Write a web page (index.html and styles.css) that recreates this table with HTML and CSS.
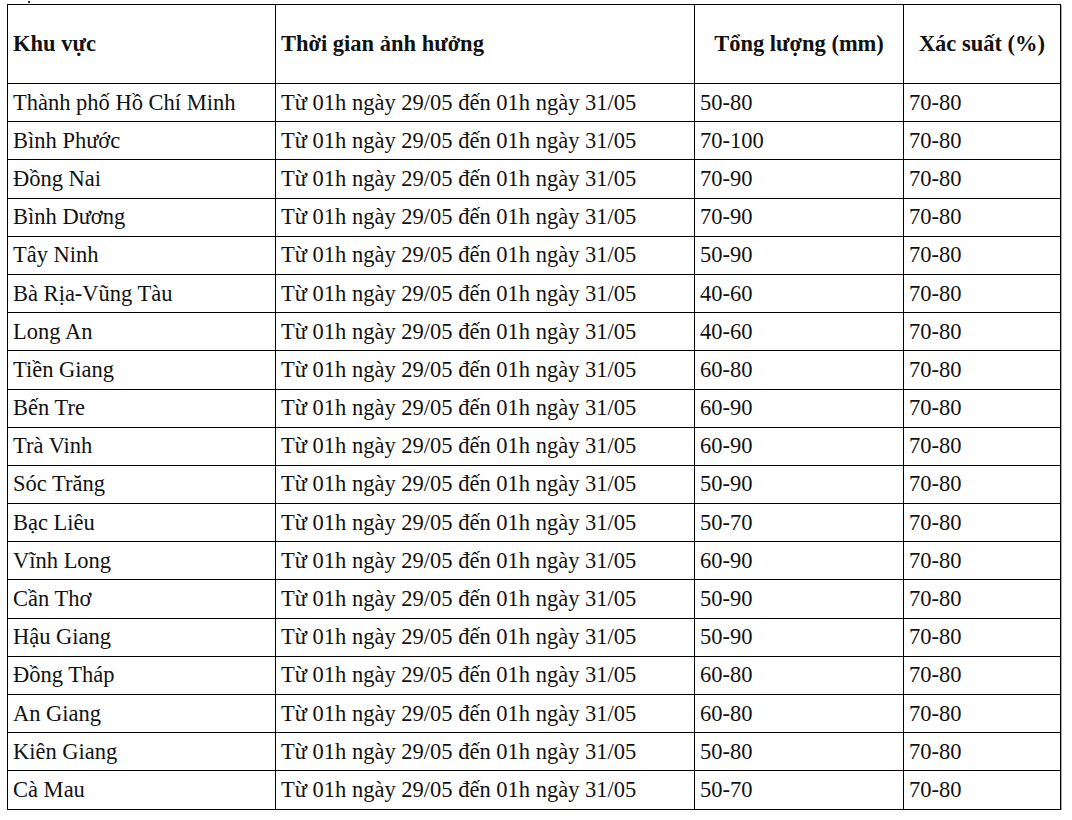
FILE: index.html
```html
<!DOCTYPE html>
<html lang="vi">
<head>
<meta charset="utf-8">
<link rel="stylesheet" href="styles.css">
</head>
<body>
<div class="page">
  <div class="cut"><span class="dot"></span></div>
  <table class="rain">
    <colgroup>
      <col class="c1"><col class="c2"><col class="c3"><col class="c4">
    </colgroup>
    <thead>
      <tr>
        <th class="left">Khu vực</th>
        <th class="left">Thời gian ảnh hưởng</th>
        <th>Tổng lượng (mm)</th>
        <th>Xác suất (%)</th>
      </tr>
    </thead>
    <tbody>
      <tr><td>Thành phố Hồ Chí Minh</td><td>Từ 01h ngày 29/05 đến 01h ngày 31/05</td><td>50-80</td><td>70-80</td></tr>
      <tr><td>Bình Phước</td><td>Từ 01h ngày 29/05 đến 01h ngày 31/05</td><td>70-100</td><td>70-80</td></tr>
      <tr><td>Đồng Nai</td><td>Từ 01h ngày 29/05 đến 01h ngày 31/05</td><td>70-90</td><td>70-80</td></tr>
      <tr><td>Bình Dương</td><td>Từ 01h ngày 29/05 đến 01h ngày 31/05</td><td>70-90</td><td>70-80</td></tr>
      <tr><td>Tây Ninh</td><td>Từ 01h ngày 29/05 đến 01h ngày 31/05</td><td>50-90</td><td>70-80</td></tr>
      <tr><td>Bà Rịa-Vũng Tàu</td><td>Từ 01h ngày 29/05 đến 01h ngày 31/05</td><td>40-60</td><td>70-80</td></tr>
      <tr><td>Long An</td><td>Từ 01h ngày 29/05 đến 01h ngày 31/05</td><td>40-60</td><td>70-80</td></tr>
      <tr><td>Tiền Giang</td><td>Từ 01h ngày 29/05 đến 01h ngày 31/05</td><td>60-80</td><td>70-80</td></tr>
      <tr><td>Bến Tre</td><td>Từ 01h ngày 29/05 đến 01h ngày 31/05</td><td>60-90</td><td>70-80</td></tr>
      <tr><td>Trà Vinh</td><td>Từ 01h ngày 29/05 đến 01h ngày 31/05</td><td>60-90</td><td>70-80</td></tr>
      <tr><td>Sóc Trăng</td><td>Từ 01h ngày 29/05 đến 01h ngày 31/05</td><td>50-90</td><td>70-80</td></tr>
      <tr><td>Bạc Liêu</td><td>Từ 01h ngày 29/05 đến 01h ngày 31/05</td><td>50-70</td><td>70-80</td></tr>
      <tr><td>Vĩnh Long</td><td>Từ 01h ngày 29/05 đến 01h ngày 31/05</td><td>60-90</td><td>70-80</td></tr>
      <tr><td>Cần Thơ</td><td>Từ 01h ngày 29/05 đến 01h ngày 31/05</td><td>50-90</td><td>70-80</td></tr>
      <tr><td>Hậu Giang</td><td>Từ 01h ngày 29/05 đến 01h ngày 31/05</td><td>50-90</td><td>70-80</td></tr>
      <tr><td>Đồng Tháp</td><td>Từ 01h ngày 29/05 đến 01h ngày 31/05</td><td>60-80</td><td>70-80</td></tr>
      <tr><td>An Giang</td><td>Từ 01h ngày 29/05 đến 01h ngày 31/05</td><td>60-80</td><td>70-80</td></tr>
      <tr><td>Kiên Giang</td><td>Từ 01h ngày 29/05 đến 01h ngày 31/05</td><td>50-80</td><td>70-80</td></tr>
      <tr><td>Cà Mau</td><td>Từ 01h ngày 29/05 đến 01h ngày 31/05</td><td>50-70</td><td>70-80</td></tr>
    </tbody>
  </table>
</div>
</body>
</html>
```

FILE: styles.css
```css
html, body {
  margin: 0;
  padding: 0;
  background: #fff;
}
body {
  font-family: "Liberation Serif", "Times New Roman", serif;
  font-size: 22.5px;
  color: #111;
}
.page {
  padding: 0 0 0 7px;
}
.cut {
  height: 4px;
  position: relative;
}
.dot {
  position: absolute;
  left: 21px;
  top: 1px;
  width: 2px;
  height: 2px;
  background: #333;
}
.rain {
  border-collapse: collapse;
  table-layout: fixed;
  width: 1053px;
  border: 1px solid #000;
  box-shadow: 1px 1px 0 #aaa;
}
.c1 { width: 268px; }
.c2 { width: 419px; }
.c3 { width: 209px; }
.c4 { width: 157px; }
.rain th, .rain td {
  border: 1px solid #000;
  padding: 0 5px;
  text-align: left;
  white-space: nowrap;
  vertical-align: middle;
  line-height: 26px;
}
.rain th {
  height: 78px;
  font-weight: bold;
  text-align: center;
}
.rain th.left {
  text-align: left;
}
.rain td {
  height: 37.2px;
}
```
